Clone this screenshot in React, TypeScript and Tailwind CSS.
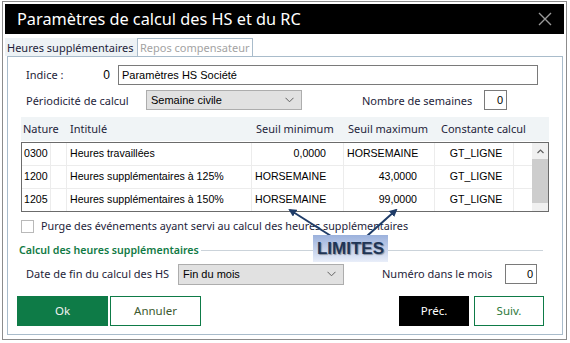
import React from 'react';

// Dialogue "Paramètres de calcul des HS et du RC"

const rows = [
  { nature: '0300', label: 'Heures travaillées', min: '0,0000', max: 'HORSEMAINE', cst: 'GT_LIGNE' },
  { nature: '1200', label: 'Heures supplémentaires à 125%', min: 'HORSEMAINE', max: '43,0000', cst: 'GT_LIGNE' },
  { nature: '1205', label: 'Heures supplémentaires à 150%', min: 'HORSEMAINE', max: '99,0000', cst: 'GT_LIGNE' },
];

const isNum = (v: string) => /^[0-9]/.test(v);

function Chevron() {
  return (
    <svg width="9" height="6" viewBox="0 0 9 6" className="shrink-0">
      <path d="M0.5 0.8 L4.5 4.8 L8.5 0.8" fill="none" stroke="#606060" strokeWidth="1" />
    </svg>
  );
}

function Select({ value, className }: { value: string; className: string }) {
  return (
    <div
      className={`flex items-center justify-between border border-[#adadad] bg-[#e1e1e1] pl-[4px] pr-[7px] font-['Liberation_Sans',sans-serif] text-[11px] text-black ${className}`}
    >
      <span>{value}</span>
      <Chevron />
    </div>
  );
}

function NumInput({ className }: { className: string }) {
  return (
    <div
      className={`flex items-center justify-end border border-[#7a7a7a] bg-white pr-[3px] font-['Liberation_Sans',sans-serif] text-[11px] text-black ${className}`}
    >
      0
    </div>
  );
}

export default function App() {
  return (
    <div className="relative h-[343px] w-[570px] bg-white pl-[2px] pt-[1px] font-['Noto_Sans',sans-serif] text-[#1e1e3a]">
      <div className="flex h-[339px] w-[565px] flex-col border border-[#8c8c8c] p-[2px]">
        {/* barre de titre */}
        <div className="flex h-[30px] shrink-0 items-center justify-between bg-black pl-[12px] pr-[12px]">
          <span className="whitespace-nowrap text-[16.3px] leading-none text-white">Paramètres de calcul des HS et du RC</span>
          <svg width="14" height="14" viewBox="0 0 14 14">
            <path d="M1 1 L13 13 M13 1 L1 13" stroke="#9a9a9a" strokeWidth="1.4" />
          </svg>
        </div>

        {/* onglets */}
        <div className="mt-[4px] flex h-[18px] shrink-0 items-end whitespace-nowrap text-[11px] leading-none">
          <div className="flex h-[18px] w-[132px] items-center bg-[#edf2f5] pl-[2px] text-[#1e1e3a]">
            Heures supplémentaires
          </div>
          <div className="flex h-[18px] w-[116px] items-center border border-b-0 border-[#a9bccb] pl-[2px] text-[#a3a3a3]">
            Repos compensateur
          </div>
        </div>

        {/* panneau */}
        <div className="ml-[2px] flex h-[279px] w-[556px] flex-col whitespace-nowrap border border-[#a9bccb] text-[11px]">
          {/* Indice */}
          <div className="mt-[8px] flex h-[20px] items-center pl-[18px]">
            <span className="w-[72px]">Indice :</span>
            <span className="w-[12px] text-right font-['Liberation_Sans',sans-serif] text-[12px] text-black">0</span>
            <div className="ml-[8px] flex h-[20px] w-[420px] items-center border border-[#7a7a7a] pl-[3px] font-['Liberation_Sans',sans-serif] text-[11px] text-black">
              Paramètres HS Société
            </div>
          </div>

          {/* Périodicité */}
          <div className="mt-[5px] flex h-[20px] items-center pl-[18px]">
            <span className="mt-[3px] w-[120px]">Périodicité de calcul</span>
            <Select value="Semaine civile" className="h-[20px] w-[156px]" />
            <span className="ml-[60px] mt-[3px] w-[122px]">Nombre de semaines</span>
            <NumInput className="h-[20px] w-[23px]" />
          </div>

          {/* tableau */}
          <div className="ml-[13px] mt-[7px] w-[528px]">
            <div className="flex h-[24px] items-center bg-[#f0f4f6] text-[11px]">
              <span className="w-[46px] pl-[2px]">Nature</span>
              <span className="w-[185px] pl-[3px]">Intitulé</span>
              <span className="w-[92px] pl-[4px]">Seuil minimum</span>
              <span className="w-[91px] pl-[4px]">Seuil maximum</span>
              <span className="w-[100px] pl-[6px]">Constante calcul</span>
            </div>
            <div className="mt-[1px] flex h-[70px] overflow-hidden border border-[#6b6b6b] font-['Liberation_Sans',sans-serif] text-[10.6px] text-black">
              <div className="flex w-[510px] shrink-0 flex-col">
                {rows.map((r) => (
                  <div key={r.nature} className="flex h-[23px] shrink-0 items-center border-b border-[#ececec]">
                    <span className="flex h-full w-[29px] shrink-0 items-center border-r border-[#ececec] pl-[2px]">{r.nature}</span>
                    <span className="h-full w-[16px] shrink-0 border-r border-[#ececec]" />
                    <span className="flex h-full w-[185px] shrink-0 items-center border-r border-[#ececec] pl-[3px]">{r.label}</span>
                    <span
                      className={`flex h-full w-[92px] shrink-0 items-center border-r border-[#ececec] ${isNum(r.min) ? 'justify-end pr-[17px]' : 'pl-[3px]'}`}
                    >
                      {r.min}
                    </span>
                    <span
                      className={`flex h-full w-[91px] shrink-0 items-center border-r border-[#ececec] ${isNum(r.max) ? 'justify-end pr-[17px]' : 'pl-[3px]'}`}
                    >
                      {r.max}
                    </span>
                    <span className="flex h-full w-[79px] shrink-0 items-center justify-center border-r border-[#ececec] pl-[4px]">{r.cst}</span>
                    <span className="h-full w-[18px] shrink-0" />
                  </div>
                ))}
              </div>
              <div className="flex w-[16px] shrink-0 flex-col bg-[#f0f0f0]">
                <div className="flex h-[16px] items-center justify-center">
                  <svg width="7" height="5" viewBox="0 0 7 5">
                    <path d="M0.5 4 L3.5 1 L6.5 4" fill="none" stroke="#606060" strokeWidth="1.2" />
                  </svg>
                </div>
                <div className="h-[44px] bg-[#cdcdcd]" />
              </div>
            </div>
          </div>

          {/* case à cocher */}
          <div className="mt-[7px] flex h-[14px] items-center pl-[13px]">
            <span className="h-[13px] w-[13px] border border-[#b9b9b9] bg-white" />
            <span className="ml-[7px] text-[10.8px]">Purge des événements ayant servi au calcul des heures supplémentaires</span>
          </div>

          {/* section */}
          <div className="mt-[10px] flex items-center pl-[11px] pr-[19px]">
            <span className="text-[10.6px] font-semibold text-[#117a45]">Calcul des heures supplémentaires</span>
            <div className="ml-[2px] h-px flex-1 bg-[#cbd3da]" />
          </div>

          <div className="mt-[5px] flex h-[21px] items-center pl-[18px]">
            <span className="w-[152px]">Date de fin du calcul des HS</span>
            <Select value="Fin du mois" className="h-[21px] w-[166px]" />
            <span className="ml-[38px] w-[123px]">Numéro dans le mois</span>
            <NumInput className="h-[20px] w-[32px]" />
          </div>

          {/* boutons */}
          <div className="mt-[11px] flex h-[30px] items-stretch pl-[9px] text-[11.5px]">
            <div className="flex w-[91px] items-center justify-center bg-[#0e7b47] text-[#f2f2f2]">Ok</div>
            <div className="ml-[2px] flex w-[91px] items-center justify-center border border-[#0e7b47] text-[#3c5a30]">Annuler</div>
            <div className="ml-[198px] flex w-[70px] items-center justify-center bg-black text-white">Préc.</div>
            <div className="ml-[5px] flex w-[70px] items-center justify-center border border-[#0e7b47] text-[#2e7a3a]">Suiv.</div>
          </div>
        </div>
      </div>

      {/* annotation : flèches vers les seuils */}
      <svg className="pointer-events-none absolute left-0 top-0" width="570" height="343" viewBox="0 0 570 343">
        <defs>
          <marker id="ah" markerWidth="8" markerHeight="8" refX="6" refY="4" orient="auto" markerUnits="userSpaceOnUse">
            <path d="M0 0 L8 4 L0 8 Z" fill="#1f3c68" />
          </marker>
        </defs>
        <line x1="331" y1="236" x2="290" y2="210" stroke="#1f3c68" strokeWidth="2" markerEnd="url(#ah)" />
        <line x1="367" y1="236" x2="396" y2="210" stroke="#1f3c68" strokeWidth="2" markerEnd="url(#ah)" />
      </svg>
      <div className="absolute left-[313px] top-[235px] flex h-[27px] w-[75px] items-center justify-center bg-linear-to-b from-[#9bb1dc] to-[#e9eef9] font-['Liberation_Sans',sans-serif] text-[17px] font-bold text-[#1f3556] [text-shadow:1px_1px_1px_rgba(0,0,0,0.35)]">
        LIMITES
      </div>
    </div>
  );
}
